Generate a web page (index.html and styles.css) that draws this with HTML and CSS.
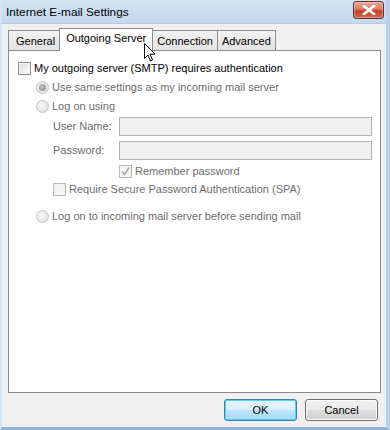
FILE: index.html
```html
<!DOCTYPE html>
<html>
<head>
<meta charset="utf-8">
<link rel="stylesheet" href="styles.css">
</head>
<body>
<div class="window">
  <div class="titlebar">
    <span class="title">Internet E-mail Settings</span>
    <span class="close"><svg width="14" height="10" viewBox="0 0 14 10"><path d="M2 1 L12 9 M12 1 L2 9" stroke="#fff" stroke-width="2.6" stroke-linecap="square"/></svg></span>
  </div>
  <div class="client">
    <div class="tabs">
      <div class="tab">General</div>
      <div class="tab active">Outgoing Server</div>
      <div class="tab">Connection</div>
      <div class="tab">Advanced</div>
    </div>
    <div class="panel">
      <label class="row main"><span class="cb"></span>My outgoing server (SMTP) requires authentication</label>
      <div class="group">
        <div class="row dis"><span class="radio checked"><span class="dot"></span></span>Use same settings as my incoming mail server</div>
        <div class="row dis"><span class="radio"></span>Log on using</div>
        <div class="fields">
          <div class="field"><span class="flabel">User Name:</span><span class="input"></span></div>
          <div class="field"><span class="flabel">Password:</span><span class="input"></span></div>
          <div class="row dis remember"><span class="cb dcb"><svg width="11" height="11" viewBox="0 0 11 11"><path d="M2 5.5 L4.5 8.5 L9 1.5" fill="none" stroke="#a8a8a8" stroke-width="1.6"/></svg></span>Remember password</div>
          <div class="row dis spa"><span class="cb dcb"></span>Require Secure Password Authentication (SPA)</div>
        </div>
        <div class="row dis last"><span class="radio"></span>Log on to incoming mail server before sending mail</div>
      </div>
    </div>
    <div class="buttons">
      <button class="btn ok">OK</button>
      <button class="btn">Cancel</button>
    </div>
  </div>
  <svg class="cursor" width="12" height="19" viewBox="0 0 12 19"><path d="M0.5 0.5 L0.5 15.5 L4 12 L6.5 18 L8.5 17 L6 11.2 L11 11.2 Z" fill="#fff" stroke="#000" stroke-width="1"/></svg>
</div>
</body>
</html>
```
FILE: styles.css
```css
* { box-sizing: border-box; }
html, body { margin: 0; padding: 0; background: #f0f0f0; }
body { font-family: "Liberation Sans", Arial, sans-serif; font-size: 11px; color: #000; }
.window {
  position: relative;
  width: 390px; height: 430px;
  display: flex; flex-direction: column;
  background: #f0f0f0;
  border-right: 4px solid #b9d1ea;
  border-bottom: 3px solid #8fb6d6;
  border-left: 2px solid #d6e3f0;
  overflow: hidden;
}
.titlebar {
  height: 24px; flex: none;
  display: flex; align-items: center; justify-content: space-between;
  padding: 0 0 0 4px;
  background: linear-gradient(#d3e3f3, #c3d8ed);
  border-bottom: 1px solid #b8cde2;
}
.title { font-size: 11.8px; color: #000; }
.close {
  width: 31px; height: 18px; margin-top: -4px; margin-right: 2px;
  display: flex; align-items: center; justify-content: center;
  border: 1px solid #6b2a24; border-radius: 3px;
  background: linear-gradient(#e8a89a 0%, #d77a66 45%, #c0422c 55%, #d06a4c 100%);
  box-shadow: inset 0 0 0 1px rgba(255,255,255,0.35);
}
.client { flex: 1; display: flex; flex-direction: column; padding: 4px 5px 0 6px; }
.tabs { display: flex; height: 22px; align-items: flex-end; position: relative; z-index: 2; }
.tab {
  height: 20px; padding: 1px 4px 0 4px; line-height: 19px;
  border: 1px solid #898c95; border-bottom: none; margin-right: -1px;
  background: linear-gradient(#f2f2f2, #e3e3e3);
  color: #000;
}
.tab:first-child { padding: 1px 5px 0 7px; }
.tab.active {
  height: 23px; background: #fff; margin-bottom: -1px; padding: 0 6px 0 6px; line-height: 18px;
  margin-left: -1px; margin-right: -1px; position: relative; z-index: 3;
}
.panel {
  height: 343px; background: #fff; border: 1px solid #898c95;
  padding: 8px 0 0 9px; position: relative; z-index: 1;
  display: flex; flex-direction: column; gap: 1px;
}
.row { display: flex; align-items: center; height: 18px; white-space: nowrap; }
.dis { color: #6d6d6d; }
.cb {
  width: 13px; height: 13px; margin-right: 3px; flex: none;
  border: 1px solid #8f8f8f;
  background: linear-gradient(135deg, #dcdcdc, #fbfbfb);
  box-shadow: inset 0 0 0 1px #f4f4f4;
  display: flex; align-items: center; justify-content: center;
}
.dcb { border-color: #b8b8b8; background: #f4f4f4; }
.group { padding-left: 18px; display: flex; flex-direction: column; gap: 1px; }
.radio {
  width: 13px; height: 13px; border-radius: 50%; margin-right: 3px; flex: none;
  border: 1px solid #c4c4c4;
  background: radial-gradient(circle at 40% 40%, #fafafa, #dadada);
  display: flex; align-items: center; justify-content: center;
}
.radio .dot { width: 7px; height: 7px; border-radius: 50%; background: radial-gradient(circle at 40% 40%, #bdbdbd, #8a8a8a); }
.fields { padding-left: 17px; display: flex; flex-direction: column; gap: 2px; margin-top: -1px; }
.field { display: flex; align-items: center; height: 22px; color: #6d6d6d; }
.flabel { width: 66px; }
.input { width: 253px; height: 19px; border: 1px solid #adb2b5; background: #f0f0f0; }
.remember { padding-left: 66px; margin-top: -1px; }
.spa { margin-top: -2px; }
.last { margin-top: 8px; }
.buttons { display: flex; justify-content: flex-end; gap: 8px; padding: 6px 3px 0 0; }
.btn {
  width: 73px; height: 22px; font-family: inherit; font-size: 11px; color: #000;
  border: 1px solid #707070; border-radius: 3px;
  background: linear-gradient(#f2f2f2 0%, #ebebeb 48%, #dddddd 52%, #cfcfcf 100%);
  box-shadow: inset 0 0 0 1px #fcfcfc;
  padding: 0;
}
.btn.ok {
  border-color: #3c7fb1;
  background: linear-gradient(#eaf6fd 0%, #d9f0fc 48%, #bee6fd 52%, #a7d9f5 100%);
  box-shadow: inset 0 0 0 1px #48d4fd;
}
.cursor { position: absolute; left: 142px; top: 43px; z-index: 10; }
```
